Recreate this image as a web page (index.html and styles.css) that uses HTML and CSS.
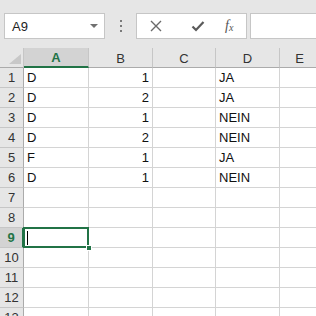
FILE: index.html
```html
<!DOCTYPE html>
<html>
<head>
<meta charset="utf-8">
<link rel="stylesheet" href="styles.css">
</head>
<body>
<div class="toolbar">
  <div class="namebox">
    <span class="ref">A9</span>
    <svg class="drop" width="8" height="5" viewBox="0 0 8 5"><path d="M0 0 L8 0 L4 4 Z" fill="#707070"/></svg>
  </div>
  <div class="dots"><span></span><span></span><span></span></div>
  <div class="fbuttons">
    <svg class="ic" width="14" height="14" viewBox="0 0 14 14"><path d="M2 2 L12 12 M12 2 L2 12" stroke="#6a6a6a" stroke-width="1.4" fill="none"/></svg>
    <svg class="ic" width="14" height="14" viewBox="0 0 14 14"><path d="M1.5 7.5 L5 11 L12.5 3" stroke="#5a5a5a" stroke-width="2.2" fill="none"/></svg>
    <span class="fx">f<sub>x</sub></span>
  </div>
  <div class="finput"></div>
</div>
<div class="sheet">
  <div class="corner"><svg width="12" height="10" viewBox="0 0 12 10"><path d="M12 0 L12 10 L0 10 Z" fill="#c8c8c8"/></svg></div>
  <div class="ch sel">A</div>
  <div class="ch">B</div>
  <div class="ch">C</div>
  <div class="ch">D</div>
  <div class="ch">E</div>

  <div class="rh">1</div><div class="c">D</div><div class="c num">1</div><div class="c"></div><div class="c">JA</div><div class="c"></div>
  <div class="rh">2</div><div class="c">D</div><div class="c num">2</div><div class="c"></div><div class="c">JA</div><div class="c"></div>
  <div class="rh">3</div><div class="c">D</div><div class="c num">1</div><div class="c"></div><div class="c">NEIN</div><div class="c"></div>
  <div class="rh">4</div><div class="c">D</div><div class="c num">2</div><div class="c"></div><div class="c">NEIN</div><div class="c"></div>
  <div class="rh">5</div><div class="c">F</div><div class="c num">1</div><div class="c"></div><div class="c">JA</div><div class="c"></div>
  <div class="rh">6</div><div class="c">D</div><div class="c num">1</div><div class="c"></div><div class="c">NEIN</div><div class="c"></div>
  <div class="rh">7</div><div class="c"></div><div class="c"></div><div class="c"></div><div class="c"></div><div class="c"></div>
  <div class="rh">8</div><div class="c"></div><div class="c"></div><div class="c"></div><div class="c"></div><div class="c"></div>
  <div class="rh rsel">9</div><div class="c active"><span class="caret"></span><span class="handle"></span></div><div class="c"></div><div class="c"></div><div class="c"></div><div class="c"></div>
  <div class="rh">10</div><div class="c"></div><div class="c"></div><div class="c"></div><div class="c"></div><div class="c"></div>
  <div class="rh">11</div><div class="c"></div><div class="c"></div><div class="c"></div><div class="c"></div><div class="c"></div>
  <div class="rh">12</div><div class="c"></div><div class="c"></div><div class="c"></div><div class="c"></div><div class="c"></div>
  <div class="rh">13</div><div class="c"></div><div class="c"></div><div class="c"></div><div class="c"></div><div class="c"></div>
</div>
</body>
</html>
```
FILE: styles.css
```css
* { box-sizing: border-box; }
html, body { margin: 0; padding: 0; background: #fff; overflow: hidden; }
body { width: 316px; height: 316px; font-family: "Liberation Sans", Arial, sans-serif; color: #222; }

.toolbar {
  height: 48px;
  background: #e6e6e6;
  display: flex;
  align-items: flex-start;
  padding: 13px 0 0 4px;
}
.namebox {
  width: 101px;
  height: 26px;
  background: #fff;
  border: 1px solid #c6c6c6;
  display: flex;
  align-items: center;
  justify-content: space-between;
  padding: 0 6px 0 7px;
  font-size: 13px;
  color: #222;
}
.namebox .drop { margin-top: 1px; }
.dots {
  width: 31px;
  height: 26px;
  display: flex;
  flex-direction: column;
  align-items: center;
  justify-content: center;
  gap: 3px;
}
.dots span { width: 2px; height: 2px; background: #7a7a7a; display: block; }
.fbuttons {
  width: 111px;
  height: 26px;
  background: #fff;
  border: 1px solid #c6c6c6;
  display: flex;
  align-items: center;
  padding-left: 12px;
  gap: 0;
}
.fbuttons .ic:first-child { margin-right: 28px; }
.fbuttons .ic:nth-child(2) { margin-right: 20px; }
.fx {
  font-family: "Liberation Serif", serif;
  font-style: italic;
  font-size: 14px;
  color: #555;
  line-height: 1;
}
.fx sub { font-size: 10px; vertical-align: -1px; }
.finput {
  flex: 1;
  height: 26px;
  margin-left: 3px;
  background: #fff;
  border: 1px solid #c6c6c6;
  border-right: none;
}

.sheet {
  display: grid;
  grid-template-columns: 24px 65px 64px 63px 64px 40px;
  grid-auto-rows: 20px;
}
.corner {
  background: #e6e6e6;
  border-right: 1px solid #c6c6c6;
  border-bottom: 1px solid #ababab;
  display: flex;
  align-items: flex-end;
  justify-content: flex-end;
  padding: 0 2px 3px 0;
}
.corner svg { display: block; }
.ch {
  background: #e6e6e6;
  border-right: 1px solid #c6c6c6;
  border-bottom: 1px solid #ababab;
  font-size: 13px;
  color: #333;
  display: flex;
  align-items: center;
  justify-content: center;
  padding-top: 1px;
}
.ch.sel {
  background: #d3d3d3;
  color: #217346;
  font-weight: bold;
  border-bottom: 2px solid #217346;
}
.rh {
  background: #e6e6e6;
  border-right: 1px solid #ababab;
  border-bottom: 1px solid #c6c6c6;
  font-size: 13px;
  color: #333;
  display: flex;
  align-items: flex-end;
  justify-content: center;
  padding-bottom: 2px;
}
.rh.rsel {
  background: #d3d3d3;
  color: #217346;
  font-weight: bold;
  border-right: 2px solid #217346;
}
.c {
  border-right: 1px solid #d4d4d4;
  border-bottom: 1px solid #d4d4d4;
  font-size: 13px;
  color: #111;
  display: flex;
  align-items: flex-end;
  padding: 0 3px 2px 3px;
  white-space: nowrap;
  overflow: hidden;
}
.c.num { justify-content: flex-end; }
.c.active { position: relative; overflow: visible; }
.c.active::after {
  content: "";
  position: absolute;
  left: -1px;
  top: -1px;
  right: -1px;
  bottom: -1px;
  border: 2px solid #217346;
}
.caret {
  position: absolute;
  left: 3px;
  top: 3px;
  width: 1px;
  height: 14px;
  background: #000;
}
.handle {
  position: absolute;
  right: -4px;
  bottom: -4px;
  width: 6px;
  height: 6px;
  background: #217346;
  border: 1px solid #fff;
  z-index: 2;
}
```
